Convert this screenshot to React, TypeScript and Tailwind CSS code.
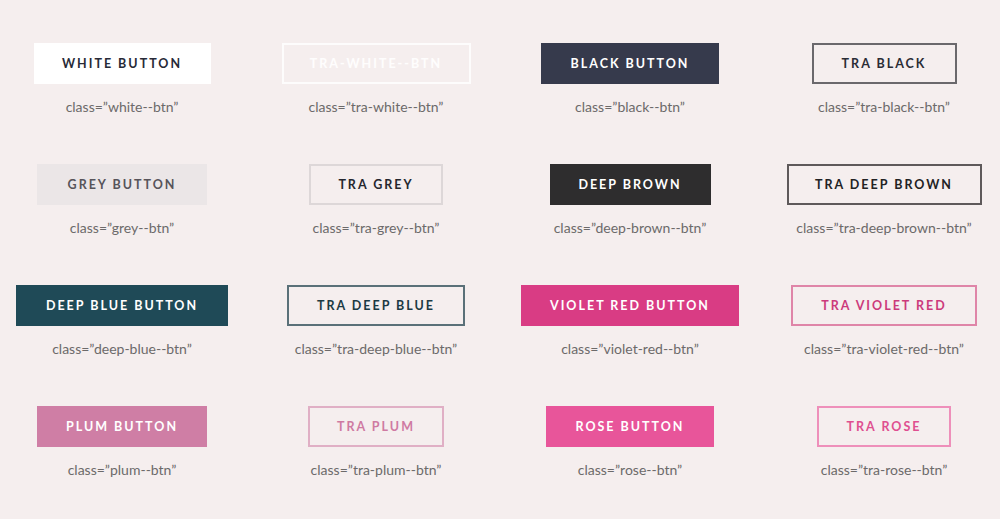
import React from 'react';

type Btn = {
  label: string;
  cls: string;
  width: string;
  style: string;
};

const buttons: Btn[] = [
  { label: 'White Button', cls: 'white--btn', width: 'w-[177px]', style: 'bg-white text-[#272a37]' },
  { label: 'tra-white--btn', cls: 'tra-white--btn', width: 'w-[189px]', style: 'border-2 border-white/80 text-white/90' },
  { label: 'Black Button', cls: 'black--btn', width: 'w-[178px]', style: 'bg-[#363a4c] text-white' },
  { label: 'Tra Black', cls: 'tra-black--btn', width: 'w-[145px]', style: 'border-2 border-[#6a686c] text-[#2a2c35]' },

  { label: 'Grey Button', cls: 'grey--btn', width: 'w-[170px]', style: 'bg-[#ebe6e7] text-[#57545a]' },
  { label: 'Tra Grey', cls: 'tra-grey--btn', width: 'w-[134px]', style: 'border-2 border-[#ddd7d8] text-[#25272f]' },
  { label: 'Deep Brown', cls: 'deep-brown--btn', width: 'w-[161px]', style: 'bg-[#2e2d2e] text-white' },
  { label: 'Tra Deep Brown', cls: 'tra-deep-brown--btn', width: 'w-[195px]', style: 'border-2 border-[#5e595a] text-[#222224]' },

  { label: 'Deep Blue Button', cls: 'deep-blue--btn', width: 'w-[212px]', style: 'bg-[#1f4a57] text-white' },
  { label: 'Tra Deep Blue', cls: 'tra-deep-blue--btn', width: 'w-[178px]', style: 'border-2 border-[#5a7078] text-[#1c3a44]' },
  { label: 'Violet Red Button', cls: 'violet-red--btn', width: 'w-[218px]', style: 'bg-[#d93c84] text-white' },
  { label: 'Tra Violet Red', cls: 'tra-violet-red--btn', width: 'w-[186px]', style: 'border-2 border-[#df85a8] text-[#cc3a7b]' },

  { label: 'Plum Button', cls: 'plum--btn', width: 'w-[170px]', style: 'bg-[#cf7ea5] text-white' },
  { label: 'Tra Plum', cls: 'tra-plum--btn', width: 'w-[136px]', style: 'border-2 border-[#e0afc5] text-[#cf7aa2]' },
  { label: 'Rose Button', cls: 'rose--btn', width: 'w-[168px]', style: 'bg-[#e8559a] text-white' },
  { label: 'Tra Rose', cls: 'tra-rose--btn', width: 'w-[134px]', style: 'border-2 border-[#ee8fba] text-[#df4f90]' },
];

export default function App() {
  return (
    <div className="min-h-[519px] w-full overflow-hidden bg-[#f5eeee] font-['Lato',sans-serif]">
      <div className="ml-[-5px] grid grid-cols-[repeat(4,254px)] gap-y-[47px] pt-[43px]">
        {buttons.map((b) => (
          <div key={b.cls} className="flex flex-col items-center">
            <div
              className={`flex h-[41px] items-center justify-center pt-px text-[12.5px] font-bold uppercase tracking-[0.16em] ${b.width} ${b.style}`}
            >
              {b.label}
            </div>
            <p className="mt-[13px] text-[14px] leading-5 text-[#6c6a6a]">
              class=”{b.cls}”
            </p>
          </div>
        ))}
      </div>
    </div>
  );
}
